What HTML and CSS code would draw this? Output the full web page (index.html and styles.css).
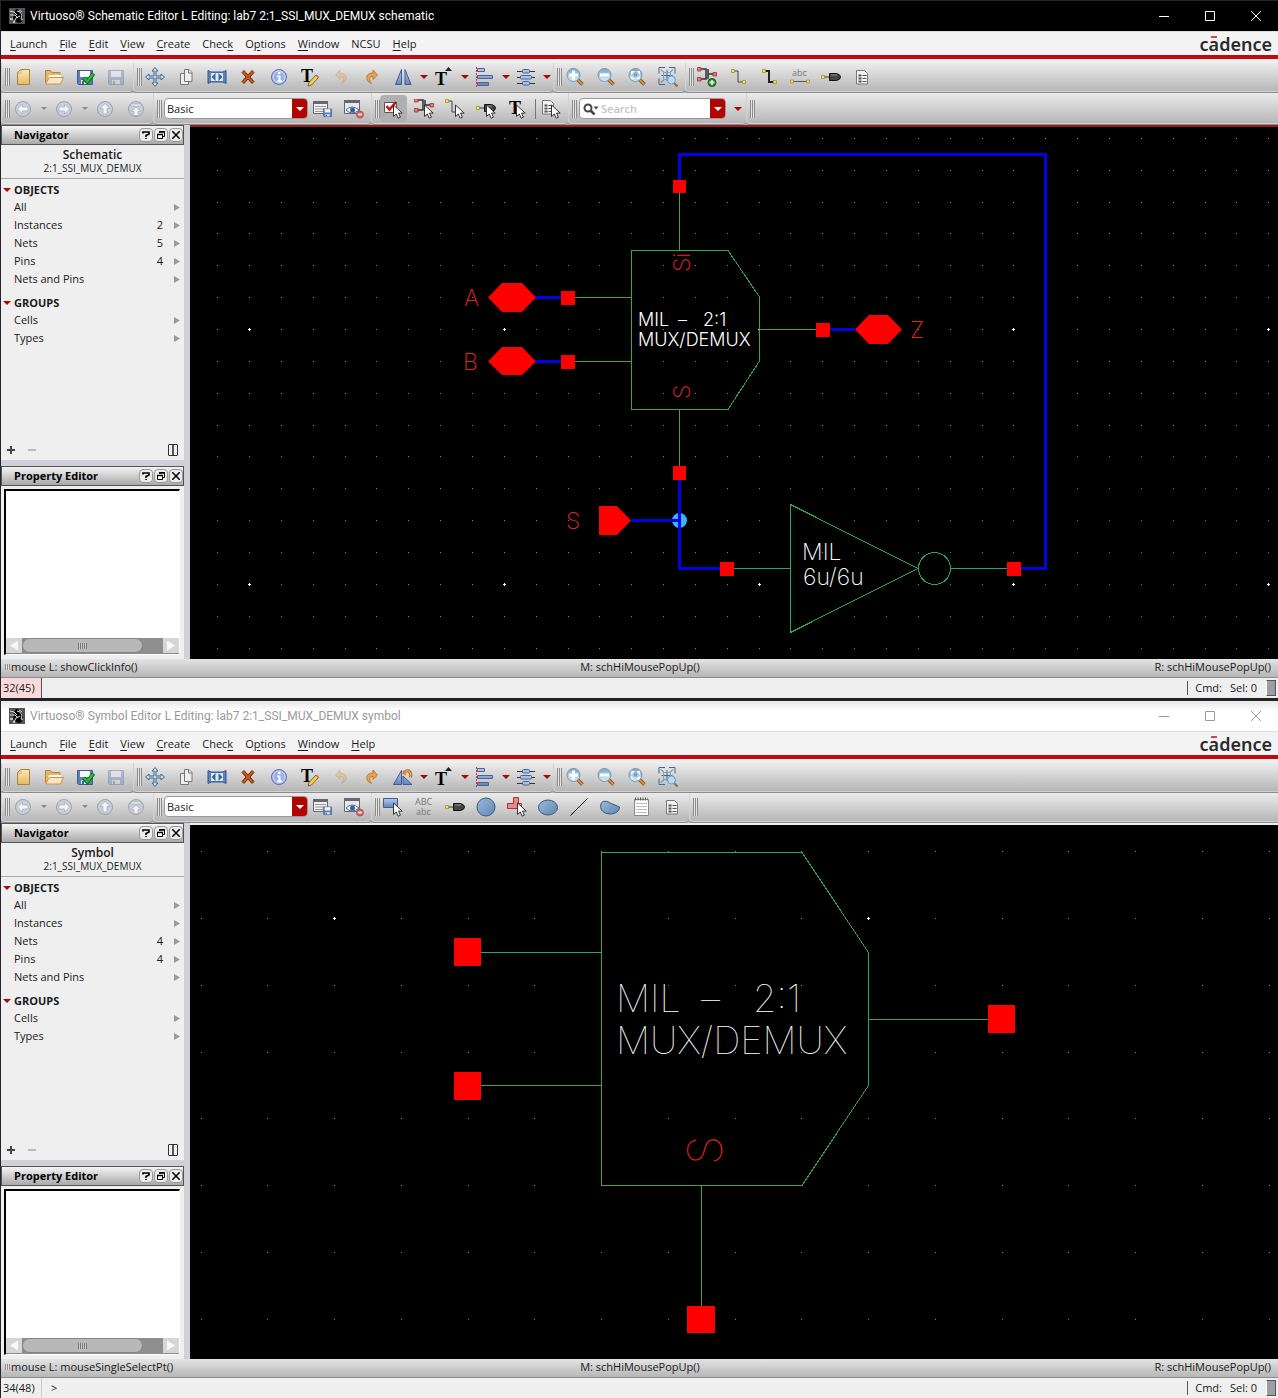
FILE: index.html
```html
<!DOCTYPE html>
<html lang="en">
<head>
  <meta charset="UTF-8">
  <meta name="viewport" content="width=device-width, initial-scale=1.0">
  <title>Virtuoso</title>
  <link rel="stylesheet" href="styles.css">
</head>
<body>
  <!-- icon sprite -->
  <svg class="sprite" width="0" height="0" aria-hidden="true">
    <defs>
      <linearGradient id="tan" x1="0" y1="0" x2="0" y2="1"><stop offset="0" stop-color="#fbe9b5"/><stop offset="1" stop-color="#e3b965"/></linearGradient>
      <linearGradient id="blue" x1="0" y1="0" x2="0" y2="1"><stop offset="0" stop-color="#b4c8ee"/><stop offset="1" stop-color="#6484bd"/></linearGradient>
      <linearGradient id="steel" x1="0" y1="0" x2="1" y2="1"><stop offset="0" stop-color="#9ab9dc"/><stop offset="1" stop-color="#6087b4"/></linearGradient>
      <linearGradient id="glass" x1="0" y1="0" x2="0" y2="1"><stop offset="0" stop-color="#79a6c9"/><stop offset="1" stop-color="#d8eefa"/></linearGradient>
    </defs>
    <symbol id="i-logo" viewBox="0 0 16 16">
      <path fill="#555" d="M0 0h16v16H0z"/>
      <path fill="#000" d="M7 1l4 1 3 5-1 7-4 1-5-4 1-6z"/>
      <path fill="none" stroke="#ddd" d="M1 3l4 1 3 3M1 7h5l3 3M5 14l2-4 4-2M8 3l3 1 2 3-1 4M10 2l3 2M12 12l2-1"/>
      <path fill="#bbb" d="M1 10h3v2H1zM4 13h2v2H4z"/>
    </symbol>
    <symbol id="i-cursor" viewBox="0 0 10 15"><path fill="#fff" stroke="#333" d="M.5 1v11.5l2.800-2.500 1.900 4.200 2.200-1-1.900-4.100h3.700z"/></symbol>
    <symbol id="i-new" viewBox="0 0 20 20"><path fill="url(#tan)" stroke="#a9823f" d="M4.500 5.500l3-3h9v15h-12z"/><path fill="#fff5d6" stroke="#b8944f" stroke-width=".7" d="M4.500 6h3.500v-3.500z"/></symbol>
    <symbol id="i-open" viewBox="0 0 20 20"><path fill="#e9b565" stroke="#b9823a" d="M1.500 15.500v-12h5l1.500 2h8v4"/><path fill="#fff" d="M5 8h12v5H4z"/><path fill="#fbe4c3" stroke="#c4924f" d="M5.500 10.500h14l-3 6.500h-15z"/></symbol>
    <symbol id="i-disk" viewBox="0 0 20 20"><path fill="#5d7fb8" stroke="#3f5c90" d="M2.500 3.500h15v14h-14l-1-1z"/><path fill="#f5f8ff" d="M5 4h10v6H5z"/><path fill="#dde3ee" d="M6 13h8v4H6z"/><path fill="#44608f" d="M7 14h2v3H7z"/></symbol>
    <symbol id="i-save-check" viewBox="0 0 20 20"><use href="#i-disk"/><path fill="none" stroke="#0c6b14" stroke-width="4" d="M8.500 11l4 4 6-8.500"/><path fill="none" stroke="#31b93a" stroke-width="2.200" d="M9 11l3.500 3.500 5.500-7.500"/></symbol>
    <symbol id="i-move" viewBox="0 0 20 20"><path fill="#c6dbec" stroke="#41698e" d="M10 .5l3 3.500h-2v5h5v-2l3.500 3-3.500 3v-2h-5v5h2l-3 3.500-3-3.500h2v-5h-5v2l-3.500-3 3.500-3v2h5v-5h-2z"/></symbol>
    <symbol id="i-copy" viewBox="0 0 20 20"><g fill="#eee" stroke="#777"><path d="M4.500 6.500h8v11h-8z"/><path d="M8.500 2.500h4.500l3 3v9h-7.500z"/><path d="M12.500 2.500v3.500h3.500"/></g></symbol>
    <symbol id="i-stretch" viewBox="0 0 20 20"><path fill="#5c84b8" stroke="#31568a" d="M1 3.500l3 1.500h12l3-1.500v13l-3-1.500h-12l-3 1.500z"/><path fill="#dce9f8" d="M4 6h12v8H4z"/><path fill="#3d6499" d="M8.500 6v8L4.500 10zM11.500 6v8l4-4z"/></symbol>
    <symbol id="i-delete" viewBox="0 0 20 20"><path fill="#c85716" stroke="#6e2b08" d="M4 5.500l2-2 4 4.500 4-4.500 2 2-4 4.500 4 4.500-2 2-4-4.500-4 4.500-2-2 4-4.500z"/></symbol>
    <symbol id="i-info" viewBox="0 0 20 20"><circle cx="10" cy="10" r="7.500" fill="#9cb2e3" stroke="#5a72b3"/><circle cx="10" cy="10" r="6" fill="none" stroke="#cfdcf8"/><path fill="#fff" d="M9 5h2.500v2H9zM8 8.500h3.500v5H13V15H8v-1.500h1.500v-3.500H8z"/></symbol>
    <symbol id="i-pencil" viewBox="0 0 20 20"><path fill="#f5cf4a" stroke="#6b4a12" stroke-width=".8" d="M8 19l1-3.500 7-7.500 2.500 2.500-7 7.500z"/><path fill="#d85555" d="M15.500 8.500l1-1 2.500 2.500-1 1z"/></symbol>
    <symbol id="i-redo" viewBox="0 0 20 20"><path fill="#e9a14e" stroke="#b36a1f" stroke-width=".8" d="M15.500 8l-4.500 4.500v-3c-4 0-4.500 3-1.500 7-6-2-7-10.500 1.500-10.500v-3z"/></symbol>
    <symbol id="i-mirror" viewBox="0 0 20 20"><path fill="url(#blue)" stroke="#3f5c93" d="M8.500 2.500v15h-6zM12 2.500v15h6z"/></symbol>
    <symbol id="i-rotate" viewBox="0 0 20 20"><path fill="url(#blue)" stroke="#3f5c93" d="M8.500 3.500v14h-8zM10 9v8.500h9z"/><path fill="none" stroke="#b36a1f" stroke-width="3" d="M10.500 5.500c6-4 8 0 7 5"/><path fill="none" stroke="#f0c58e" d="M10.500 5.500c6-4 8 0 7 5"/><path fill="#d98c3d" d="M8 6.500l5-4v6z"/></symbol>
    <symbol id="i-peak" viewBox="0 0 20 20"><path fill="#222" d="M11 4l3.500-4L18 4z"/></symbol>
    <symbol id="i-align" viewBox="0 0 20 20"><path stroke="#d33" d="M1.500 0v20" stroke-dasharray="2 1"/><g fill="url(#blue)" stroke="#4a6492"><path d="M2.500 1.500h7v3h-7zM2.500 8.500h15v3h-15zM2.500 15.500h11v3h-11z"/></g></symbol>
    <symbol id="i-dist" viewBox="0 0 20 20"><path stroke="#333" d="M1 4.500h18M1 10.500h18M1 16.500h18"/><g fill="#a9c0e8" stroke="#4a6492"><rect x="6.500" y="2.500" width="7" height="3.500" rx="1"/><rect x="4.500" y="8.500" width="11" height="3.500" rx="1"/><rect x="6.500" y="14.500" width="7" height="3.500" rx="1"/></g></symbol>
    <symbol id="i-lens" viewBox="0 0 20 20"><path stroke="#8a4f1c" stroke-width="3.500" d="M12 12l5.500 5.500"/><path stroke="#e0a05a" stroke-width="1.500" d="M12 12l5.500 5.500"/><circle cx="8.500" cy="8" r="6.500" fill="url(#glass)" stroke="#7b97ab"/></symbol>
    <symbol id="i-zoomin" viewBox="0 0 20 20"><use href="#i-lens"/><path stroke="#fff" stroke-width="3" d="M4 8h9M8.500 3.500v9"/></symbol>
    <symbol id="i-zoomout" viewBox="0 0 20 20"><use href="#i-lens"/><path stroke="#fff" stroke-width="3" d="M4 8h9"/></symbol>
    <symbol id="i-zoomfit" viewBox="0 0 20 20"><use href="#i-lens"/><path fill="#fff" d="M4 4h4L4 8zM13 4H9.500L13 8zM4 12V9l3.500 3zM13 12V9l-3.500 3z"/><path fill="#789dba" d="M7 6.500h3v3H7z"/></symbol>
    <symbol id="i-zoomsel" viewBox="0 0 20 20"><path fill="none" stroke="#41698e" d="M1 6.500V.5h6M11 .5h6v6M1 11.500v6h6M3 2.500l3 3M15 2.500l-3 3M3 15.500l3-3M9 3v11M3.500 8.500h11"/><path fill="none" stroke="#7fa3c2" d="M5.500 5.500h7v7h-7z"/><path stroke="#a8662a" stroke-width="2" d="M16 16l3.500 3.500"/><circle cx="13.500" cy="13" r="4" fill="#b8dcf2" stroke="#6d9cc4"/></symbol>
    <symbol id="i-inst" viewBox="0 0 20 20"><path fill="none" stroke="#333" stroke-width="1.500" d="M4 3h5v10H4M11 3v10M11 8h5"/><g fill="#e77" stroke="#933" stroke-width=".8"><path d="M.5 1.500h3.500v3.500H.5zM.5 11.500h3.500v3.500H.5zM16 6.500h3.500v3.500H16z"/></g></symbol>
    <symbol id="i-instadd" viewBox="0 0 20 20"><use href="#i-inst" y="-1"/><circle cx="15" cy="15.500" r="4" fill="#27912c" stroke="#0d5e12"/><path stroke="#fff" stroke-width="1.500" d="M12.500 15.500h5M15 13v5"/></symbol>
    <symbol id="i-wire" viewBox="0 0 20 20"><path fill="none" stroke="#444" d="M4 4h6v11h6"/><path fill="#f4e36a" stroke="#a08f20" stroke-width=".8" d="M3.500 2.500h3v3h-3zM14.500 13.500h3v3h-3z"/></symbol>
    <symbol id="i-wirew" viewBox="0 0 20 20"><path fill="none" stroke="#222" stroke-width="2" d="M4 4h6v11h6"/><path fill="#f4e36a" stroke="#a08f20" stroke-width=".8" d="M3.500 2.500h3v3h-3zM14.500 13.500h3v3h-3z"/></symbol>
    <symbol id="i-span" viewBox="0 0 20 20"><path stroke="#555" d="M2 14.500h16"/><path fill="#f4e36a" stroke="#a08f20" stroke-width=".8" d="M.5 13h3v3h-3zM16.500 13h3v3h-3z"/></symbol>
    <symbol id="i-pin" viewBox="0 0 20 20"><path stroke="#333" d="M2 10h7"/><path fill="#444" stroke="#111" d="M8.500 6.500h7q4 1 4 3.500t-4 3.500h-7z"/><path stroke="#999" d="M10 8h6"/><path fill="#f4e36a" stroke="#a08f20" stroke-width=".8" d="M.5 8.500h3v3h-3z"/></symbol>
    <symbol id="i-sheet" viewBox="0 0 20 20"><path fill="#f2f2f2" stroke="#777" d="M4.500 3.500h8l3 3v10.500h-11z"/><path stroke="#555" stroke-width="2" d="M6.500 8.500h3M6.500 11.500h3M6.500 14.500h3"/><path stroke="#555" d="M10.500 8.500h4M10.500 11.500h4M10.500 14.500h4"/></symbol>
    <symbol id="i-left" viewBox="0 0 20 20"><circle cx="10" cy="10" r="7.500" fill="#c9ced8" stroke="#9aa3b2"/><path fill="#f3f4f7" stroke="#a5adba" stroke-width=".7" d="M4.500 10l5-5v3h5.500v4h-5.500v3z"/></symbol>
    <symbol id="i-right" viewBox="0 0 20 20"><use href="#i-left" transform="rotate(180 10 10)"/></symbol>
    <symbol id="i-up" viewBox="0 0 20 20"><use href="#i-left" transform="rotate(90 10 10)"/></symbol>
    <symbol id="i-top" viewBox="0 0 20 20"><circle cx="10" cy="10" r="7.500" fill="#c9ced8" stroke="#9aa3b2"/><path fill="#f3f4f7" stroke="#a5adba" stroke-width=".7" d="M5 5h10v2H5zM10 8l5 4.500h-3v4H8v-4H5z"/></symbol>
    <symbol id="i-wssave" viewBox="0 0 20 20"><path fill="#f0f0f0" stroke="#667" d="M.5 2.500h14v12H.5z"/><path fill="#667" d="M0 2h15v3H0z"/><path stroke="#999" d="M2 7.500h11M2 10h11M2 12.500h11"/><use href="#i-disk" x="9" y="8" width="11" height="11"/></symbol>
    <symbol id="i-wsview" viewBox="0 0 20 20"><path fill="#e8e8e8" stroke="#667" d="M.5 1.500h15v13H.5z"/><path fill="#667" d="M0 1h16v3H0z"/><path fill="#fff" stroke="#456a99" d="M2 11q6-6 13 0-7 6-13 0z"/><circle cx="8.500" cy="11" r="2.500" fill="#35619b"/><circle cx="16" cy="15.500" r="3.500" fill="#d86464" stroke="#b04040" stroke-width=".7"/><path stroke="#fff" stroke-width="1.500" d="M14 15.500h4"/></symbol>
    <symbol id="i-selcheck" viewBox="0 0 20 20"><path fill="#fff" stroke="#555" d="M1.500 3.500h12v10h-12z"/><path fill="none" stroke="#d01010" stroke-width="2.500" d="M3.500 7l3 3.500 6.500-7.500"/><use href="#i-cursor" x="10" y="5" width="10" height="15"/></symbol>
    <symbol id="i-selinst" viewBox="0 0 20 20"><use href="#i-inst" y="-2"/><use href="#i-cursor" x="10" y="5" width="10" height="15"/></symbol>
    <symbol id="i-selwire" viewBox="0 0 20 20"><use href="#i-wire" x="-3" y="-2"/><use href="#i-cursor" x="10" y="5" width="10" height="15"/></symbol>
    <symbol id="i-selpin" viewBox="0 0 20 20"><use href="#i-pin" y="-1"/><use href="#i-cursor" x="10" y="5" width="10" height="15"/></symbol>
    <symbol id="i-selsheet" viewBox="0 0 20 20"><use href="#i-sheet" x="-3" y="-2"/><use href="#i-cursor" x="10" y="5" width="10" height="15"/></symbol>
    <symbol id="i-selrect" viewBox="0 0 20 20"><path fill="url(#blue)" stroke="#3f5c93" d="M.5 1.500h14v9H.5z"/><use href="#i-cursor" x="10" y="5" width="10" height="15"/></symbol>
    <symbol id="i-circle" viewBox="0 0 20 20"><circle cx="10" cy="10" r="9" fill="url(#steel)" stroke="#3b5876"/></symbol>
    <symbol id="i-selpoly" viewBox="0 0 20 20"><path fill="#e58a8a" stroke="#a33" d="M.5 6.500h6v-6h5v6h3v5H.5z"/><use href="#i-cursor" x="10" y="5" width="10" height="15"/></symbol>
    <symbol id="i-ellipse" viewBox="0 0 20 20"><ellipse cx="10" cy="10.500" rx="9.500" ry="7.500" fill="url(#steel)" stroke="#3b5876"/></symbol>
    <symbol id="i-line" viewBox="0 0 20 20"><path stroke="#000" d="M1.500 18.500l17-17"/></symbol>
    <symbol id="i-arc" viewBox="0 0 20 20"><path fill="url(#steel)" stroke="#3b5876" d="M1 12c-2-9 5-9 9-6l9.500 4c0 4-4 7-9 7s-8-2-9.500-5z"/></symbol>
    <symbol id="i-note" viewBox="0 0 20 20"><path fill="#fff" stroke="#888" d="M3.500 2.500h14v16h-14z"/><path stroke="#555" stroke-width="3" stroke-dasharray="1 1.500" d="M4 2h13"/><path stroke="#bbb" d="M5 6.500h11M5 9.500h11M5 12.500h11M5 15.500h11"/></symbol>
    <symbol id="i-tri" viewBox="0 0 8 4"><path fill="currentColor" d="M0 0h8L4 4z"/></symbol>
    <symbol id="i-go" viewBox="0 0 6 7"><path fill="#999" d="M0 0v7l6-3.500z"/></symbol>
    <symbol id="i-min" viewBox="0 0 10 10"><path stroke="currentColor" d="M0 5.500h10"/></symbol>
    <symbol id="i-max" viewBox="0 0 10 10"><path fill="none" stroke="currentColor" d="M.5.5h9v9h-9z"/></symbol>
    <symbol id="i-close" viewBox="0 0 10 10"><path stroke="currentColor" d="M0 0l10 10M10 0L0 10"/></symbol>
    <symbol id="i-q" viewBox="0 0 8 8"><path fill="none" stroke="#000" stroke-width="1.600" d="M1 2.500V1h6v2L4 4.500V6M4 7v1.500"/></symbol>
    <symbol id="i-float" viewBox="0 0 8 8"><path fill="none" stroke="#000" d="M2.500 2V.5h5v5H6"/><path stroke="#000" stroke-width="1.500" d="M2 1h6"/><path fill="#fff" stroke="#000" d="M.5 3.500h5v4h-5z"/><path stroke="#000" stroke-width="1.500" d="M0 3.500h6"/></symbol>
    <symbol id="i-x" viewBox="0 0 8 8"><path stroke="#000" stroke-width="1.500" d="M0 0l8 8M8 0L0 8"/></symbol>
    <symbol id="i-mag" viewBox="0 0 16 12"><circle cx="5" cy="5" r="3.500" fill="#fff" stroke="#444" stroke-width="2"/><path stroke="#444" stroke-width="2.500" d="M7.500 7.500l4 4"/><path fill="#444" d="M10.500 3.500h5l-2.500 3z"/></symbol>
  </svg>

  <!-- schematic editor -->
  <section class="window active">
    <header class="titlebar">
      <svg class="app-icon"><use href="#i-logo"/></svg>
      <h1>Virtuoso® Schematic Editor L Editing: lab7 2:1_SSI_MUX_DEMUX schematic</h1>
      <button class="win-btn" aria-label="Minimize"><svg><use href="#i-min"/></svg></button>
      <button class="win-btn" aria-label="Maximize"><svg><use href="#i-max"/></svg></button>
      <button class="win-btn" aria-label="Close"><svg><use href="#i-close"/></svg></button>
    </header>
    <nav class="menubar">
      <button><u>L</u>aunch</button><button><u>F</u>ile</button><button><u>E</u>dit</button><button><u>V</u>iew</button><button><u>C</u>reate</button><button>Chec<u>k</u></button><button>O<u>p</u>tions</button><button><u>W</u>indow</button><button>NCSU</button><button><u>H</u>elp</button>
      <span class="brand">c<span class="macron">a</span>dence</span>
    </nav>
    <div class="toolbar">
      <div class="group">
        <i class="grip"></i>
        <button class="tool" aria-label="New"><svg><use href="#i-new"/></svg></button>
        <button class="tool" aria-label="Open"><svg><use href="#i-open"/></svg></button>
        <button class="tool" aria-label="Check and Save"><svg><use href="#i-save-check"/></svg></button>
        <button class="tool dim" aria-label="Save"><svg><use href="#i-disk"/></svg></button>
      </div>
      <div class="group">
        <i class="grip"></i>
        <button class="tool" aria-label="Move"><svg><use href="#i-move"/></svg></button>
        <button class="tool" aria-label="Copy"><svg><use href="#i-copy"/></svg></button>
        <button class="tool" aria-label="Stretch"><svg><use href="#i-stretch"/></svg></button>
        <button class="tool" aria-label="Delete"><svg><use href="#i-delete"/></svg></button>
        <button class="tool" aria-label="Info"><svg><use href="#i-info"/></svg></button>
        <button class="tool" aria-label="Edit text"><svg><text x="1" y="15" class="serif">T</text><use href="#i-pencil"/></svg></button>
        <button class="tool dim flip" aria-label="Undo"><svg><use href="#i-redo"/></svg></button>
        <button class="tool" aria-label="Redo"><svg><use href="#i-redo"/></svg></button>
        <button class="tool" aria-label="Mirror"><svg><use href="#i-mirror"/></svg></button>
        <button class="drop" aria-label="Mirror options"><svg><use href="#i-tri"/></svg></button>
        <button class="tool" aria-label="Text up"><svg><text x="1" y="18" class="serif">T</text><use href="#i-peak"/></svg></button>
        <button class="drop" aria-label="Text options"><svg><use href="#i-tri"/></svg></button>
        <button class="tool" aria-label="Align"><svg><use href="#i-align"/></svg></button>
        <button class="drop" aria-label="Align options"><svg><use href="#i-tri"/></svg></button>
        <button class="tool" aria-label="Distribute"><svg><use href="#i-dist"/></svg></button>
        <button class="drop" aria-label="Distribute options"><svg><use href="#i-tri"/></svg></button>
      </div>
      <div class="group">
        <i class="grip"></i>
        <button class="tool" aria-label="Zoom in"><svg><use href="#i-zoomin"/></svg></button>
        <button class="tool" aria-label="Zoom out"><svg><use href="#i-zoomout"/></svg></button>
        <button class="tool" aria-label="Zoom fit"><svg><use href="#i-zoomfit"/></svg></button>
        <button class="tool" aria-label="Zoom selected"><svg><use href="#i-zoomsel"/></svg></button>
      </div>
      <div class="group last">
        <i class="grip"></i>
        <button class="tool" aria-label="Create instance"><svg><use href="#i-instadd"/></svg></button>
        <button class="tool" aria-label="Create narrow wire"><svg><use href="#i-wire"/></svg></button>
        <button class="tool" aria-label="Create wide wire"><svg><use href="#i-wirew"/></svg></button>
        <button class="tool" aria-label="Create label"><svg><text x="2" y="9" class="sans">abc</text><use href="#i-span"/></svg></button>
        <button class="tool" aria-label="Create pin"><svg><use href="#i-pin"/></svg></button>
        <button class="tool" aria-label="Options form"><svg><use href="#i-sheet"/></svg></button>
      </div>
    </div>
    <div class="toolbar tall">
      <div class="group">
        <i class="grip"></i>
        <button class="tool" aria-label="Back"><svg><use href="#i-left"/></svg></button>
        <button class="drop off" aria-label="Back list"><svg><use href="#i-tri"/></svg></button>
        <button class="tool" aria-label="Forward"><svg><use href="#i-right"/></svg></button>
        <button class="drop off" aria-label="Forward list"><svg><use href="#i-tri"/></svg></button>
        <button class="tool" aria-label="Up"><svg><use href="#i-up"/></svg></button>
        <button class="tool" aria-label="Top"><svg><use href="#i-top"/></svg></button>
      </div>
      <div class="group">
        <i class="grip"></i>
        <div class="combo">
          <select aria-label="Workspace"><option>Basic</option></select>
          <span class="combo-arrow"><svg><use href="#i-tri"/></svg></span>
        </div>
        <button class="tool" aria-label="Save workspace"><svg><use href="#i-wssave"/></svg></button>
        <button class="tool" aria-label="Hide workspace"><svg><use href="#i-wsview"/></svg></button>
      </div>
      <div class="group">
        <i class="grip"></i>
        <button class="tool pressed" aria-label="Select all types"><svg><use href="#i-selcheck"/></svg></button>
        <button class="tool" aria-label="Select instances"><svg><use href="#i-selinst"/></svg></button>
        <button class="tool" aria-label="Select wires"><svg><use href="#i-selwire"/></svg></button>
        <button class="tool" aria-label="Select pins"><svg><use href="#i-selpin"/></svg></button>
        <button class="tool" aria-label="Select text"><svg><text x="2" y="15" class="serif">T</text><use href="#i-cursor" x="9" y="5" width="10" height="15"/></svg></button>
        <i class="divider"></i>
        <button class="tool" aria-label="Selection options"><svg><use href="#i-selsheet"/></svg></button>
      </div>
      <div class="group">
        <i class="grip"></i>
        <div class="combo search">
          <svg class="mag"><use href="#i-mag"/></svg>
          <input type="text" placeholder="Search" aria-label="Search">
          <span class="combo-arrow"><svg><use href="#i-tri"/></svg></span>
        </div>
        <button class="drop lone" aria-label="Search options"><svg><use href="#i-tri"/></svg></button>
      </div>
      <div class="group last"><i class="grip"></i></div>
    </div>
    <div class="workarea">
      <aside class="side">
        <div class="dock navigator">
          <div class="dock-head"><h2>Navigator</h2>
            <button aria-label="Help"><svg><use href="#i-q"/></svg></button><button aria-label="Float"><svg><use href="#i-float"/></svg></button><button aria-label="Close"><svg><use href="#i-x"/></svg></button>
          </div>
          <div class="cell-info"><strong>Schematic</strong><span>2:1_SSI_MUX_DEMUX</span></div>
          <h3><svg><use href="#i-tri"/></svg>OBJECTS</h3>
          <ul>
            <li>All<svg><use href="#i-go"/></svg></li>
            <li>Instances<b>2</b><svg><use href="#i-go"/></svg></li>
            <li>Nets<b>5</b><svg><use href="#i-go"/></svg></li>
            <li>Pins<b>4</b><svg><use href="#i-go"/></svg></li>
            <li>Nets and Pins<svg><use href="#i-go"/></svg></li>
          </ul>
          <h3><svg><use href="#i-tri"/></svg>GROUPS</h3>
          <ul>
            <li>Cells<svg><use href="#i-go"/></svg></li>
            <li>Types<svg><use href="#i-go"/></svg></li>
          </ul>
          <div class="dock-foot"><button aria-label="Add"><i class="plus"></i></button><button aria-label="Remove" disabled><i class="minus"></i></button><button aria-label="Columns"><i class="columns"></i></button></div>
        </div>
        <div class="dock property">
          <div class="dock-head"><h2>Property Editor</h2>
            <button aria-label="Help"><svg><use href="#i-q"/></svg></button><button aria-label="Float"><svg><use href="#i-float"/></svg></button><button aria-label="Close"><svg><use href="#i-x"/></svg></button>
          </div>
          <div class="prop-box">
            <div class="scrollbar"><button aria-label="Scroll left"><i class="tri-left"></i></button><div class="track"><div class="thumb"><i></i></div></div><button aria-label="Scroll right"><i class="tri-right"></i></button></div>
          </div>
        </div>
      </aside>
      <svg class="canvas" data-x="59" data-y="202" data-pitch="31.85">
        <g class="grid"></g>
        <g class="shape">
          <path d="M489.500 66V123.500M385 170.500h56M385 234.500h56M569 202.500h57M489.500 283v56M544 441.500h56M761 441.500h56"/>
          <path d="M441.500 123.500H538L569.500 170V234L538 282.500H441.500z"/>
          <path d="M600.500 377.500L728 441.500L600.500 505.500z"/>
          <circle cx="744.500" cy="441.500" r="16"/>
        </g>
        <circle class="junction" cx="489.500" cy="393.500" r="7.500"/>
        <path class="wire" d="M489.500 53V27.500H855.500V441.500H831M346 170.500h25M346 234.500h25M640 202.500h25M489.500 353V441.500H530M441 393.500h48"/>
        <path class="pin" d="M483 53h13v13h-13zM371 164h14v14h-14zM371 228h14v14h-14zM626 196h14v14h-14zM483 339h13v14h-13zM530 435h14v14h-14zM817 435h14v14h-14z"/>
        <path class="pin" d="M298 170.500l14-14.500h20l14 14.500-14 14.500h-20zM298 234.500l14-14.500h20l14 14.500-14 13.500h-20zM665 202.500l14-14.500h19l14 14.500-14 14.500h-19zM409 379h18l14 14.500-14 14.500h-18z"/>
        <g class="net medium">
          <text x="274" y="179">A</text>
          <text x="273" y="243">B</text>
          <text x="720" y="211">Z</text>
          <text x="376" y="402">S</text>
          <text transform="translate(500 145) rotate(-90)">Si</text>
          <text transform="translate(500 272) rotate(-90)">S</text>
        </g>
        <g class="note small">
          <text y="199"><tspan x="448">MIL</tspan><tspan x="488">–</tspan><tspan x="513">2:1</tspan></text>
          <text x="448" y="219">MUX/DEMUX</text>
        </g>
        <g class="note medium">
          <text x="612" y="433">MIL</text>
          <text x="613" y="458">6u/6u</text>
        </g>
      </svg>
    </div>
    <div class="mousebar"><span><i class="grip"></i>mouse L: showClickInfo()</span><span>M: schHiMousePopUp()</span><span>R: schHiMousePopUp()</span></div>
    <footer class="status"><span class="count alert">32(45)</span><span class="prompt"></span><span class="cmd">Cmd:</span><span>Sel: 0</span><i class="led"></i></footer>
  </section>

  <!-- symbol editor -->
  <section class="window">
    <header class="titlebar">
      <svg class="app-icon"><use href="#i-logo"/></svg>
      <h1>Virtuoso® Symbol Editor L Editing: lab7 2:1_SSI_MUX_DEMUX symbol</h1>
      <button class="win-btn" aria-label="Minimize"><svg><use href="#i-min"/></svg></button>
      <button class="win-btn" aria-label="Maximize"><svg><use href="#i-max"/></svg></button>
      <button class="win-btn" aria-label="Close"><svg><use href="#i-close"/></svg></button>
    </header>
    <nav class="menubar">
      <button><u>L</u>aunch</button><button><u>F</u>ile</button><button><u>E</u>dit</button><button><u>V</u>iew</button><button><u>C</u>reate</button><button>Chec<u>k</u></button><button>O<u>p</u>tions</button><button><u>W</u>indow</button><button><u>H</u>elp</button>
      <span class="brand">c<span class="macron">a</span>dence</span>
    </nav>
    <div class="toolbar">
      <div class="group">
        <i class="grip"></i>
        <button class="tool" aria-label="New"><svg><use href="#i-new"/></svg></button>
        <button class="tool" aria-label="Open"><svg><use href="#i-open"/></svg></button>
        <button class="tool" aria-label="Check and Save"><svg><use href="#i-save-check"/></svg></button>
        <button class="tool dim" aria-label="Save"><svg><use href="#i-disk"/></svg></button>
      </div>
      <div class="group">
        <i class="grip"></i>
        <button class="tool" aria-label="Move"><svg><use href="#i-move"/></svg></button>
        <button class="tool" aria-label="Copy"><svg><use href="#i-copy"/></svg></button>
        <button class="tool" aria-label="Stretch"><svg><use href="#i-stretch"/></svg></button>
        <button class="tool" aria-label="Delete"><svg><use href="#i-delete"/></svg></button>
        <button class="tool" aria-label="Info"><svg><use href="#i-info"/></svg></button>
        <button class="tool" aria-label="Edit text"><svg><text x="1" y="15" class="serif">T</text><use href="#i-pencil"/></svg></button>
        <button class="tool dim flip" aria-label="Undo"><svg><use href="#i-redo"/></svg></button>
        <button class="tool" aria-label="Redo"><svg><use href="#i-redo"/></svg></button>
        <button class="tool" aria-label="Rotate"><svg><use href="#i-rotate"/></svg></button>
        <button class="drop" aria-label="Rotate options"><svg><use href="#i-tri"/></svg></button>
        <button class="tool" aria-label="Text up"><svg><text x="1" y="18" class="serif">T</text><use href="#i-peak"/></svg></button>
        <button class="drop" aria-label="Text options"><svg><use href="#i-tri"/></svg></button>
        <button class="tool" aria-label="Align"><svg><use href="#i-align"/></svg></button>
        <button class="drop" aria-label="Align options"><svg><use href="#i-tri"/></svg></button>
        <button class="tool" aria-label="Distribute"><svg><use href="#i-dist"/></svg></button>
        <button class="drop" aria-label="Distribute options"><svg><use href="#i-tri"/></svg></button>
      </div>
      <div class="group last">
        <i class="grip"></i>
        <button class="tool" aria-label="Zoom in"><svg><use href="#i-zoomin"/></svg></button>
        <button class="tool" aria-label="Zoom out"><svg><use href="#i-zoomout"/></svg></button>
        <button class="tool" aria-label="Zoom fit"><svg><use href="#i-zoomfit"/></svg></button>
        <button class="tool" aria-label="Zoom selected"><svg><use href="#i-zoomsel"/></svg></button>
      </div>
    </div>
    <div class="toolbar">
      <div class="group">
        <i class="grip"></i>
        <button class="tool" aria-label="Back"><svg><use href="#i-left"/></svg></button>
        <button class="drop off" aria-label="Back list"><svg><use href="#i-tri"/></svg></button>
        <button class="tool" aria-label="Forward"><svg><use href="#i-right"/></svg></button>
        <button class="drop off" aria-label="Forward list"><svg><use href="#i-tri"/></svg></button>
        <button class="tool" aria-label="Up"><svg><use href="#i-up"/></svg></button>
        <button class="tool" aria-label="Top"><svg><use href="#i-top"/></svg></button>
      </div>
      <div class="group">
        <i class="grip"></i>
        <div class="combo">
          <select aria-label="Workspace"><option>Basic</option></select>
          <span class="combo-arrow"><svg><use href="#i-tri"/></svg></span>
        </div>
        <button class="tool" aria-label="Save workspace"><svg><use href="#i-wssave"/></svg></button>
        <button class="tool" aria-label="Hide workspace"><svg><use href="#i-wsview"/></svg></button>
      </div>
      <div class="group">
        <i class="grip"></i>
        <button class="tool" aria-label="Selection box"><svg><use href="#i-selrect"/></svg></button>
        <button class="tool" aria-label="Label"><svg><text x="1" y="8" class="sans">ABC</text><text x="2" y="18" class="sans">abc</text></svg></button>
        <button class="tool" aria-label="Pin"><svg><use href="#i-pin"/></svg></button>
        <button class="tool" aria-label="Circle"><svg><use href="#i-circle"/></svg></button>
        <button class="tool" aria-label="Polygon"><svg><use href="#i-selpoly"/></svg></button>
        <button class="tool" aria-label="Ellipse"><svg><use href="#i-ellipse"/></svg></button>
        <button class="tool" aria-label="Line"><svg><use href="#i-line"/></svg></button>
        <button class="tool" aria-label="Arc"><svg><use href="#i-arc"/></svg></button>
        <button class="tool" aria-label="Note"><svg><use href="#i-note"/></svg></button>
        <button class="tool" aria-label="Options form"><svg><use href="#i-sheet"/></svg></button>
      </div>
      <div class="group last"><i class="grip"></i></div>
    </div>
    <div class="workarea">
      <aside class="side">
        <div class="dock navigator">
          <div class="dock-head"><h2>Navigator</h2>
            <button aria-label="Help"><svg><use href="#i-q"/></svg></button><button aria-label="Float"><svg><use href="#i-float"/></svg></button><button aria-label="Close"><svg><use href="#i-x"/></svg></button>
          </div>
          <div class="cell-info"><strong>Symbol</strong><span>2:1_SSI_MUX_DEMUX</span></div>
          <h3><svg><use href="#i-tri"/></svg>OBJECTS</h3>
          <ul>
            <li>All<svg><use href="#i-go"/></svg></li>
            <li>Instances<svg><use href="#i-go"/></svg></li>
            <li>Nets<b>4</b><svg><use href="#i-go"/></svg></li>
            <li>Pins<b>4</b><svg><use href="#i-go"/></svg></li>
            <li>Nets and Pins<svg><use href="#i-go"/></svg></li>
          </ul>
          <h3><svg><use href="#i-tri"/></svg>GROUPS</h3>
          <ul>
            <li>Cells<svg><use href="#i-go"/></svg></li>
            <li>Types<svg><use href="#i-go"/></svg></li>
          </ul>
          <div class="dock-foot"><button aria-label="Add"><i class="plus"></i></button><button aria-label="Remove" disabled><i class="minus"></i></button><button aria-label="Columns"><i class="columns"></i></button></div>
        </div>
        <div class="dock property">
          <div class="dock-head"><h2>Property Editor</h2>
            <button aria-label="Help"><svg><use href="#i-q"/></svg></button><button aria-label="Float"><svg><use href="#i-float"/></svg></button><button aria-label="Close"><svg><use href="#i-x"/></svg></button>
          </div>
          <div class="prop-box">
            <div class="scrollbar"><button aria-label="Scroll left"><i class="tri-left"></i></button><div class="track"><div class="thumb"><i></i></div></div><button aria-label="Scroll right"><i class="tri-right"></i></button></div>
          </div>
        </div>
      </aside>
      <svg class="canvas symbol" data-x="144" data-y="93" data-pitch="66.75">
        <g class="grid"></g>
        <g class="shape">
          <path d="M411.500 27.500H612L678.500 127.500V260.500L612 360.500H411.500z"/>
          <path d="M291 127.500h120M291 260.500h120M679 194.500h119M511.500 361v120"/>
        </g>
        <path class="pin" d="M264 113h27v28h-27zM264 247h27v28h-27zM798 180h27v28h-27zM497 481h28v27h-28z"/>
        <g class="note large">
          <text y="187"><tspan x="426">MIL</tspan><tspan x="511">–</tspan><tspan x="563">2:1</tspan></text>
          <text x="426" y="229">MUX/DEMUX</text>
        </g>
        <text class="net huge" transform="translate(532 340) rotate(-90)">S</text>
      </svg>
    </div>
    <div class="mousebar"><span><i class="grip"></i>mouse L: mouseSingleSelectPt()</span><span>M: schHiMousePopUp()</span><span>R: schHiMousePopUp()</span></div>
    <footer class="status"><span class="count">34(48)</span><span class="prompt">&gt;</span><span class="cmd">Cmd:</span><span>Sel: 0</span><i class="led"></i></footer>
  </section>

  <script src="script.js"></script>
</body>
</html>
```
FILE: styles.css
```css
* {
    box-sizing: border-box;
}
body {
    margin: 0;
    font-family: "Open Sans", "Noto Sans", sans-serif;
    font-size: 11px;
    line-height: 14px;
    color: #1a1a1a;
    background: #efefef;
}
button, select, input {
    font: inherit;
    color: inherit;
    border: none;
    background: none;
    padding: 0;
    margin: 0;
}
h1, h2, h3, ul {
    margin: 0;
    padding: 0;
    font-size: 11px;
}
.sprite {
    position: absolute;
}

/* window frame */
.window {
    border-left: 1px solid #26262a;
    border-top: 1px solid #26262a;
}
.window.active {
    border-bottom: 2px solid #222226;
}
.titlebar {
    display: flex;
    align-items: center;
    height: 30px;
    padding-left: 8px;
    background: linear-gradient(#e8e8e8, #fff 10px);
    color: #999;
}
.active .titlebar {
    background: #000;
    color: #fff;
}
.titlebar h1 {
    flex: 1;
    margin-left: 5px;
    font-family: Roboto, "Noto Sans", sans-serif;
    font-size: 12px;
    font-weight: normal;
}
.app-icon {
    width: 16px;
    height: 16px;
}
.win-btn {
    width: 46px;
    height: 30px;
}
.win-btn svg {
    display: block;
    width: 10px;
    height: 10px;
    margin: 0 17px 0 19px;
}

/* menu */
.menubar {
    display: flex;
    align-items: center;
    height: 28px;
    padding: 0 6px 0 3px;
    background: #f3f3f3;
    border-top: 1px solid #ddd;
    border-bottom: 4px solid #c00a0e;
}
.menubar button {
    padding: 0 6px;
    line-height: 16px;
}
.menubar u {
    text-underline-offset: 2px;
    text-decoration-thickness: 1px;
}
.brand {
    margin-left: auto;
    font-family: "Noto Sans", sans-serif;
    font-size: 18px;
    font-weight: 600;
    line-height: 20px;
    color: #2b2b2e;
}
.macron {
    position: relative;
}
.macron::before {
    content: "";
    position: absolute;
    left: 2px;
    top: 4px;
    width: 6px;
    height: 2px;
    background: #d0474b;
}

/* toolbars */
.menubar + .toolbar {
    margin-top: 4px;
}
.toolbar {
    display: flex;
    height: 30px;
    background: #b0b0b0;
}
.toolbar.tall {
    height: 32px;
}
.group {
    display: flex;
    align-items: center;
    padding: 0 1px 2px 4px;
    border-bottom: 1px solid #8a8a8a;
    border-radius: 0 0 4px 4px;
    background: linear-gradient(#ebebeb, #b5b5b5);
    box-shadow: inset 1px -1px 0 #d2d2d2;
}
.group.last {
    flex: 1;
    border-radius: 0 0 0 4px;
}
.tall .group {
    padding-bottom: 0;
}
.grip {
    width: 5px;
    height: 18px;
    margin-right: -2px;
    background: repeating-linear-gradient(90deg, #8c8c8c 0 1px, #e4e4e4 1px 2px);
}
.tool {
    width: 27px;
    height: 27px;
    margin: 0 2px;
    border-radius: 4px;
}
.tool svg {
    display: block;
    width: 20px;
    height: 20px;
    margin: 0 3px;
}
.tool.dim {
    opacity: .35;
}
.tool.flip svg {
    transform: scaleX(-1);
}
.tool.pressed {
    background: #b0b0b0;
}
.serif {
    font-family: "Liberation Serif", serif;
    font-size: 18px;
    font-weight: bold;
    fill: #000;
}
.sans {
    font-size: 9px;
    fill: #777;
}
.drop {
    width: 10px;
    height: 24px;
    color: #a80808;
}
.drop svg, .combo-arrow svg {
    display: block;
    width: 8px;
    height: 4px;
    margin: 0 auto;
}
.drop.off {
    color: #888;
}
.drop.off svg {
    height: 3px;
}
.drop.lone {
    margin: 0 2px 0 7px;
}
.divider {
    width: 1px;
    height: 20px;
    margin-left: 2px;
    background: #777;
}
.combo {
    display: flex;
    align-items: center;
    width: 144px;
    height: 21px;
    margin-left: 4px;
    border: 1px solid #999;
    border-radius: 4px;
    background: #fff;
    overflow: hidden;
}
.combo select, .combo input {
    flex: 1;
    min-width: 0;
    height: 19px;
    padding-left: 2px;
    appearance: none;
    outline: none;
}
.combo-arrow {
    display: flex;
    align-items: center;
    width: 15px;
    height: 19px;
    background: #b30404;
    color: #fff;
    pointer-events: none;
}
.search {
    width: 147px;
}
.mag {
    width: 16px;
    height: 12px;
    margin-left: 3px;
}
.search input::placeholder {
    color: #c4c4c4;
    font-weight: 600;
    opacity: 1;
}

/* side docks */
.workarea {
    display: flex;
}
.side {
    display: flex;
    flex-direction: column;
    width: 189px;
    border-right: 6px solid #d0d0d6;
    background: #efefef;
}
.dock {
    display: flex;
    flex-direction: column;
}
.navigator {
    flex: 1;
    border-bottom: 6px solid #d0d0d6;
}
.dock-head {
    display: flex;
    align-items: center;
    height: 20px;
    padding: 0 0 0 12px;
    border: 1px solid #555;
    background: linear-gradient(#f4f4f4, #a9a9a9);
}
.dock-head h2 {
    flex: 1;
    color: #000;
}
.dock-head button {
    width: 14px;
    height: 14px;
    margin-left: 1px;
    border: 1px solid #999;
    border-radius: 4px;
    background: #ececec;
}
.dock-head svg {
    display: block;
    width: 8px;
    height: 8px;
    margin: 0 auto;
}
.cell-info {
    height: 34px;
    padding-top: 3px;
    border-bottom: 1px solid #aaa;
    text-align: center;
}
.cell-info strong {
    display: block;
    font-size: 12px;
    font-weight: 600;
}
.cell-info span {
    display: block;
    font-size: 10px;
    line-height: 12px;
}
.dock h3 {
    display: flex;
    align-items: center;
    height: 17px;
    margin-top: 2px;
    padding-left: 2px;
}
.dock ul + h3 {
    margin-top: 6px;
}
.dock h3 svg {
    width: 8px;
    height: 4px;
    margin-right: 3px;
    color: #a80808;
}
.dock ul {
    list-style: none;
}
.dock li {
    display: flex;
    align-items: center;
    height: 18px;
    padding: 0 4px 0 13px;
}
.dock li b {
    margin-left: auto;
    font-weight: normal;
}
.dock li svg {
    width: 6px;
    height: 7px;
    margin-left: auto;
}
.dock li b + svg {
    margin-left: 11px;
}
.dock-foot {
    display: flex;
    align-items: center;
    margin-top: auto;
    height: 20px;
    padding: 0 6px;
}
.dock-foot button {
    width: 10px;
    height: 14px;
    margin-right: 11px;
}
.dock-foot button:last-child {
    margin: 0 0 0 auto;
}
.dock-foot i {
    display: block;
}
.plus, .minus {
    width: 8px;
    height: 8px;
    background: linear-gradient(#444, #444) center / 8px 2px no-repeat, linear-gradient(#444, #444) center / 2px 8px no-repeat;
}
.minus {
    background: linear-gradient(#bbb, #bbb) center / 8px 2px no-repeat;
}
.columns {
    width: 10px;
    height: 12px;
    border: 1px solid #333;
    border-radius: 1px;
    background: linear-gradient(#555, #555) center / 2px 10px no-repeat;
}
.property {
    height: 193px;
}
.prop-box {
    display: flex;
    flex: 1;
    align-items: flex-end;
    margin: 3px 4px 4px 3px;
    border: 1px solid #fff;
    border-top: 2px solid #000;
    border-left: 2px solid #000;
    background: #fff;
}
.scrollbar {
    display: flex;
    width: 100%;
    height: 16px;
    background: #8e8e8e;
}
.scrollbar button {
    width: 16px;
    border-bottom: 1px solid #888;
    background: #d6d6d6;
}
.tri-left, .tri-right {
    display: block;
    width: 8px;
    height: 10px;
    margin: 0 auto;
    background: #f8f8f8;
    clip-path: polygon(100% 0, 0 50%, 100% 100%);
}
.tri-right {
    clip-path: polygon(0 0, 100% 50%, 0 100%);
}
.track {
    flex: 1;
}
.thumb {
    display: flex;
    align-items: center;
    justify-content: center;
    width: 86%;
    height: 15px;
    border: 1px solid #858585;
    border-radius: 8px;
    background: #b8b8b8;
}
.thumb i {
    width: 9px;
    height: 6px;
    background: repeating-linear-gradient(90deg, #777 0 1px, #ccc 1px 2px);
}

/* drawing area */
.canvas {
    flex: 1;
    min-width: 0;
    height: 534px;
    background: #000;
    border-top: 2px solid #941c1c;
}
.canvas.symbol {
    height: 536px;
    border-top-color: #f0f0f0;
}
.shape {
    fill: none;
    stroke: #2fa75e;
    shape-rendering: crispEdges;
}
.wire {
    fill: none;
    stroke: #0202e6;
    stroke-width: 3;
}
.pin {
    fill: #f00;
}
.junction {
    fill: #35b4ff;
}
.grid {
    shape-rendering: crispEdges;
}
.minor {
    fill: #858585;
}
.major {
    fill: #fff;
}
.canvas text {
    font-family: Inter, Roboto, sans-serif;
    font-weight: 200;
}
.note {
    fill: #fff;
}
.net {
    fill: #e02424;
}
.small {
    font-size: 18px;
}
.medium {
    font-size: 23px;
}
.large {
    font-size: 38px;
}
.huge {
    font-size: 48px;
}
.canvas .small text {
    font-weight: 300;
}
.canvas .large text, .canvas .huge {
    font-weight: 100;
}

/* bottom bars */
.mousebar {
    display: grid;
    grid-template-columns: 1fr 1fr 1fr;
    align-items: center;
    height: 19px;
    padding: 0 7px 2px 4px;
    border-bottom: 1px solid #8c8c8c;
    background: linear-gradient(#e4e4e4, #b6b6b6);
}
.mousebar span {
    display: flex;
    align-items: center;
    justify-content: center;
    padding-left: 4px;
}
.mousebar span:first-child {
    justify-content: flex-start;
    padding-left: 0;
}
.mousebar span:last-child {
    justify-content: flex-end;
}
.mousebar .grip {
    height: 6px;
    margin-right: 1px;
}
.status {
    display: flex;
    align-items: center;
    height: 20px;
    background: #efefef;
}
.count {
    width: 41px;
    padding-left: 2px;
    line-height: 20px;
    border-right: 1px solid #ccc;
}
.count.alert {
    border-right-color: #555;
    background: #f9d9d9;
}
.prompt {
    flex: 1;
    padding-left: 9px;
}
.cmd {
    margin-right: 8px;
    padding-left: 7px;
    border-left: 1px solid #555;
}
.led {
    width: 10px;
    height: 16px;
    margin: 0 2px 0 9px;
    border: 1px solid #555;
    border-left-color: #fff;
    background: #9c9ca4;
}
```
FILE: script.js
```js
// fill every drawing area with its snap grid, each 8th point is a major one
const canvases = document.querySelectorAll('.canvas');

function drawGrid(canvas) {
    const pitch = Number(canvas.dataset.pitch);
    const x0 = Number(canvas.dataset.x);
    const y0 = Number(canvas.dataset.y);
    const box = canvas.getBoundingClientRect();
    let minor = '';
    let major = '';
    for (let i = -Math.floor(x0 / pitch); x0 + i * pitch < box.width; i++) {
        for (let j = -Math.floor(y0 / pitch); y0 + j * pitch < box.height; j++) {
            const x = Math.round(x0 + i * pitch);
            const y = Math.round(y0 + j * pitch);
            if (i % 8 === 0 && j % 8 === 0) {
                major += `M${x - 1} ${y}h3v1h-3zM${x} ${y - 1}h1v3h-1z`;
            } else {
                minor += `M${x} ${y}h1v1h-1z`;
            }
        }
    }
    canvas.querySelector('.grid').innerHTML = `<path class="minor" d="${minor}"/><path class="major" d="${major}"/>`;
}

function drawAll() {
    canvases.forEach(drawGrid);
}

drawAll();
window.addEventListener('resize', drawAll);
```
